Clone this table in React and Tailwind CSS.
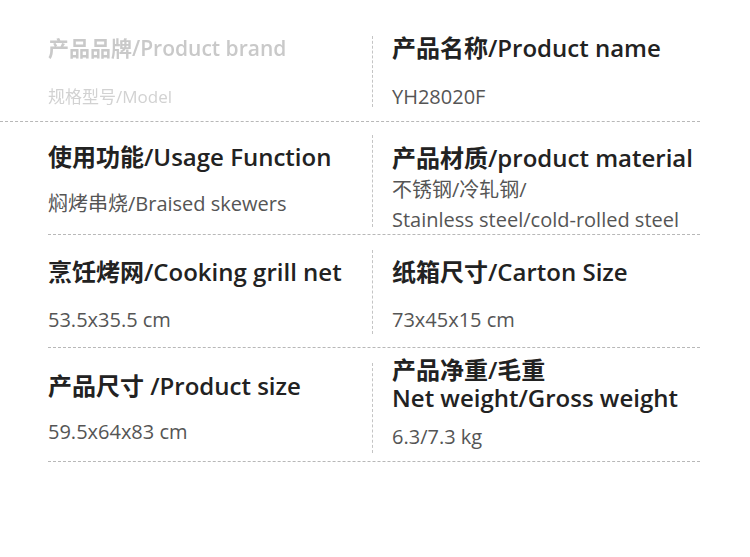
import React from 'react';

const font = { fontFamily: '"Open Sans", "Noto Sans CJK SC", sans-serif' };

const Head = ({ children, className = '', lh = 'leading-[32px]' }) => (
    <div className={`text-[24px] ${lh} font-semibold text-[#222] whitespace-nowrap ${className}`}>{children}</div>
);

const Value = ({ children, className = '' }) => (
    <div className={`text-[20px] leading-[30px] text-[#555] whitespace-nowrap ${className}`}>{children}</div>
);

const App = () => {
    return (
        <div className="w-[750px] h-[557px] bg-white overflow-hidden" style={font}>
            {/* Row 1 - faded first cell */}
            <div className="flex h-[122px] border-b border-dashed border-[#b8b8b8] mr-[50px]">
                <div className="w-[372px] pl-[48px] pt-[32px]">
                    <div className="text-[21px] leading-[32px] font-semibold text-[#c9c9c9] blur-[0.7px] whitespace-nowrap">
                        产品品牌/Product brand
                    </div>
                    <div className="mt-[18px] text-[17px] leading-[30px] text-[#d2d2d2] blur-[0.7px] whitespace-nowrap">
                        规格型号/Model
                    </div>
                </div>
                <div className="flex-1 mt-[36px] mb-[14px] border-l border-dashed border-[#c4c4c4] pl-[19px]">
                    <div className="-mt-[4px]">
                        <Head>产品名称/Product name</Head>
                        <Value className="mt-[18px]">YH28020F</Value>
                    </div>
                </div>
            </div>

            {/* Row 2 */}
            <div className="flex h-[113px] border-b border-dashed border-[#b8b8b8] ml-[48px] mr-[50px]">
                <div className="w-[324px] pt-[19px]">
                    <Head>使用功能/Usage Function</Head>
                    <Value className="mt-[16px]">焖烤串烧/Braised skewers</Value>
                </div>
                <div className="flex-1 mt-[13px] mb-[7px] border-l border-dashed border-[#c4c4c4] pl-[19px] pt-[7px]">
                    <Head>产品材质/product material</Head>
                    <Value className="mt-[1px]">不锈钢/冷轧钢/</Value>
                    <Value>Stainless steel/cold-rolled steel</Value>
                </div>
            </div>

            {/* Row 3 */}
            <div className="flex h-[113px] border-b border-dashed border-[#b8b8b8] ml-[48px] mr-[50px]">
                <div className="w-[324px] pt-[21px]">
                    <Head>烹饪烤网/Cooking grill net</Head>
                    <Value className="mt-[17px]">53.5x35.5 cm</Value>
                </div>
                <div className="flex-1 mt-[15px] mb-[13px] border-l border-dashed border-[#c4c4c4] pl-[19px] pt-[6px]">
                    <Head>纸箱尺寸/Carton Size</Head>
                    <Value className="mt-[17px]">73x45x15 cm</Value>
                </div>
            </div>

            {/* Row 4 */}
            <div className="flex h-[114px] border-b border-dashed border-[#b8b8b8] ml-[48px] mr-[50px]">
                <div className="w-[324px] pt-[22px]">
                    <Head>产品尺寸 /Product size</Head>
                    <Value className="mt-[15px]">59.5x64x83 cm</Value>
                </div>
                <div className="flex-1 mt-[15px] mb-[8px] border-l border-dashed border-[#c4c4c4] pl-[19px]">
                    <div className="-mt-[7px]">
                        <Head lh="leading-[28px]">产品净重/毛重</Head>
                        <Head lh="leading-[28px]">Net weight/Gross weight</Head>
                        <Value className="mt-[10px]">6.3/7.3 kg</Value>
                    </div>
                </div>
            </div>
        </div>
    );
};

export default App;
